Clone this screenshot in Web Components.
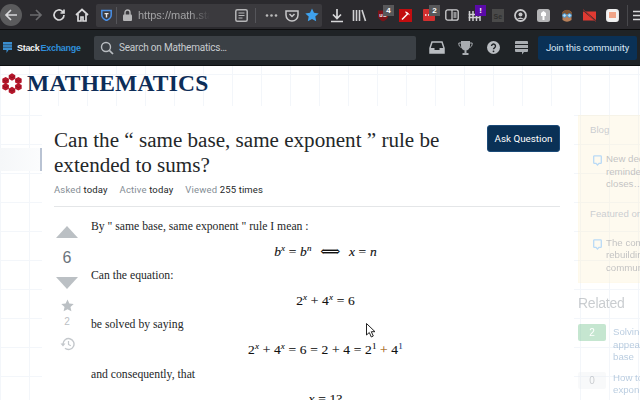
<!DOCTYPE html>
<html><head><meta charset="utf-8"><title>Mathematics</title>
<style>
html,body{margin:0;padding:0;width:640px;height:400px;overflow:hidden;background:#fff;font-family:"Liberation Sans",sans-serif}
</style></head><body>
<browser-toolbar></browser-toolbar>
<se-header></se-header>
<site-banner></site-banner>
<page-body></page-body>
<mouse-cursor></mouse-cursor>
<script>
function def(name,html){customElements.define(name,class extends HTMLElement{constructor(){super();this.attachShadow({mode:'open'}).innerHTML=html.replace(/\{(\w+)\}/g,(m,k)=>this.getAttribute(k)||'')}})}

def('tool-icon',`<style>
:host{display:flex;align-items:center;justify-content:center;width:23px;height:28px;position:relative;flex:none}
span{position:absolute;top:4px;left:12px;width:11px;height:11px;font:bold 8px/11px "Liberation Sans",sans-serif;color:#fff;text-align:center;background:var(--b,#58585a);display:var(--d,block)}
</style><slot></slot><span>{badge}</span>`);

def('browser-toolbar',`<style>
:host{display:flex;align-items:center;height:28px;padding-top:1px;background:#2b2a2e;border-bottom:1px solid #0c0c0d;overflow:hidden}
svg{display:block}
.s{fill:none;stroke:#d8d8da;stroke-width:1.7}
.back{width:22px;height:22px;border-radius:50%;background:#5b5b5d;display:flex;align-items:center;justify-content:center;flex:none}
.url{flex:none;width:226px;height:23px;margin-left:3px;background:#3b3a3e;border-radius:2px;display:flex;align-items:center;position:relative;box-sizing:border-box}
.url tool-icon{--d:none}
.txt{font:11px/23px "Liberation Sans",sans-serif;color:#a3a3a5;width:72px;overflow:hidden;white-space:nowrap;-webkit-mask:linear-gradient(90deg,#000 72%,transparent);mask:linear-gradient(90deg,#000 72%,transparent)}
.sep{width:1px;height:15px;background:#55555a;flex:none}
.none{--d:none}
</style>
<div class="back"><svg width="14" height="14" viewBox="0 0 14 14"><path class="s" d="M13 7H2M7 2 2 7l5 5"/></svg></div>
<tool-icon class="none" style="margin-left:2px"><svg width="14" height="14" viewBox="0 0 14 14"><path d="M1 7h11M7 2l5 5-5 5" fill="none" stroke="#6b6b6e" stroke-width="1.7"/></svg></tool-icon>
<tool-icon class="none"><svg width="14" height="14" viewBox="0 0 14 14"><path class="s" d="M12 7a5 5 0 1 1-1.6-3.7L12 5M12 1.500V5H8.500"/></svg></tool-icon>
<tool-icon class="none"><svg width="14" height="14" viewBox="0 0 14 14"><path class="s" d="M1 7 7 1.500 13 7M3 6v7h3V9h2v4h3V6"/></svg></tool-icon>
<div class="url">
 <tool-icon style="width:20px"><svg width="11" height="12" viewBox="0 0 11 12"><path d="M.8 1.500h9.400V6c0 3-2.500 4.500-4.700 5.500C3.300 10.500.8 9 .8 6z" fill="none" stroke="#4a90e6" stroke-width="1.500"/><path d="M3.500 4h4v1.200h-1.300V8.500H4.800V5.200H3.500z" fill="#e8e8ea"/></svg></tool-icon>
 <div class="sep" style="height:17px"></div>
 <tool-icon style="width:21px"><svg width="11" height="12" viewBox="0 0 11 12"><path d="M3 6V3.500a2.500 2.500 0 0 1 5 0V6" fill="none" stroke="#b5b5b7" stroke-width="1.400"/><rect x="1" y="5.500" width="9" height="6.500" rx="1" fill="#b5b5b7"/></svg></tool-icon>
 <div class="txt">https://math.stackexchange.com</div>
 <div style="flex:1"></div>
 <tool-icon style="width:23px"><svg width="13" height="13" viewBox="0 0 13 13"><rect x=".8" y=".8" width="11.400" height="11.400" rx="1.500" fill="none" stroke="#b5b5b7" stroke-width="1.500"/><path d="M3.500 4h6M3.500 6.500h6M3.500 9h4" stroke="#b5b5b7"/></svg></tool-icon>
 <div class="sep" style="margin:0 4px 0 2px"></div>
 <tool-icon style="width:22px"><svg width="13" height="3" viewBox="0 0 13 3"><circle cx="2" cy="1.500" r="1.300" fill="#bbb"/><circle cx="6.500" cy="1.500" r="1.300" fill="#bbb"/><circle cx="11" cy="1.500" r="1.300" fill="#bbb"/></svg></tool-icon>
 <tool-icon style="width:19px"><svg width="14" height="13" viewBox="0 0 14 13"><path d="M1 2h12v4a6 6 0 0 1-12 0z" fill="none" stroke="#c8c8ca" stroke-width="1.500"/><path d="M4.500 5 7 7.500 9.500 5" fill="none" stroke="#c8c8ca" stroke-width="1.500"/></svg></tool-icon>
 <tool-icon style="width:21px"><svg width="14" height="14" viewBox="0 0 14 14"><path d="M7 .5l2 4.300 4.700.6-3.400 3.200.9 4.700L7 11l-4.200 2.300.9-4.700L.3 5.400 5 4.800z" fill="#3fa2ee"/></svg></tool-icon>
</div>
<div style="width:3px;flex:none"></div>
<tool-icon class="none"><svg width="14" height="15" viewBox="0 0 14 15"><path d="M7 1v9M3 6.500 7 10.500l4-4M1 13.500h12" fill="none" stroke="#d8d8da" stroke-width="1.700"/></svg></tool-icon>
<tool-icon class="none"><svg width="15" height="13" viewBox="0 0 15 13"><path d="M1.500 1v11M4.500 1v11M7.500 1v11M10 1l3.500 11" fill="none" stroke="#d0d0d2" stroke-width="1.600"/></svg></tool-icon>
<tool-icon badge="4"><svg width="12" height="13" viewBox="0 0 12 13"><path d="M1 1.500h10V7c0 3-3 4.500-5 5.500C4 11.500 1 10 1 7z" fill="#7d1318"/><text x="2.300" y="8" font-family="Liberation Sans" font-size="5.500" font-weight="bold" fill="#eee">uO</text></svg></tool-icon>
<tool-icon class="none"><svg width="13" height="13" viewBox="0 0 13 13"><rect width="13" height="13" fill="#c20d0f"/><path d="M3 10.500 9 4.500" stroke="#fff" stroke-width="1.500"/><path d="M6 2.500q3 0 5 4-2-2-4-2z" fill="#fff"/></svg></tool-icon>
<tool-icon badge="2"><svg width="12" height="12" viewBox="0 0 12 12"><rect width="12" height="12" rx="1" fill="#d32f2f"/><path d="M2 6h1.500M5 6h1.500M8 6h1.500" stroke="#fff" stroke-width="1.500"/></svg></tool-icon>
<tool-icon class="none"><svg width="14" height="12" viewBox="0 0 14 12"><rect x=".8" y=".8" width="12.400" height="10.400" rx="2" fill="none" stroke="#d0d0d2" stroke-width="1.300"/><path d="M7 1v10" stroke="#d0d0d2" stroke-width="1.200"/><rect x="8.500" y="3" width="3" height="6" fill="#8f8f92"/></svg></tool-icon>
<tool-icon badge="!" style="--b:#5a0aa8"><svg width="13" height="13" viewBox="0 0 13 13"><path d="M1.500 2v10M5 2v10M8.500 2v10M12 2v10M.5 5.500h12M.5 8.500h12" fill="none" stroke="#d0d0d2" stroke-width="1.500"/></svg></tool-icon>
<tool-icon class="none"><svg width="12" height="13" viewBox="0 0 12 13"><rect width="12" height="13" fill="#4a4a4a"/><text x="1.500" y="10" font-family="Liberation Sans" font-size="7" font-weight="bold" fill="#2f2f2f">Se</text></svg></tool-icon>
<tool-icon class="none"><svg width="13" height="13" viewBox="0 0 13 13"><circle cx="6.500" cy="6.500" r="5.500" fill="none" stroke="#c8c8ca" stroke-width="1.800"/><circle cx="6.500" cy="5.500" r="2" fill="#c8c8ca"/><path d="M3 10q3.500-3 7 0z" fill="#c8c8ca"/></svg></tool-icon>
<tool-icon class="none"><svg width="13" height="13" viewBox="0 0 13 13"><rect width="13" height="13" rx="2.500" fill="#b4b4b6"/><path d="M4 4l2.500-2L9 4v3H7.500v4h-2V7H4z" fill="#fff"/></svg></tool-icon>
<tool-icon class="none"><svg width="14" height="15" viewBox="0 0 14 15"><path d="M2.500 4q4.500-4 9 0v8q-4.500 3.500-9 0z" fill="#b8805a"/><path d="M2 5Q7-1.500 12 5l-.5 1h-9z" fill="#7d5230"/><circle cx="4.500" cy="7.500" r="1.800" fill="#bfe0f2" stroke="#3c9ae0"/><circle cx="9.500" cy="7.500" r="1.800" fill="#bfe0f2" stroke="#3c9ae0"/></svg></tool-icon>
<tool-icon class="none"><svg width="15" height="13" viewBox="0 0 15 13"><rect x="1" y="2.500" width="13" height="9" fill="#e03a32"/><path d="M1 1l13 11" stroke="#2b2a2e" stroke-width="1.300"/><path d="M1 .5 14 12.500" stroke="#e03a32" stroke-width=".6"/></svg></tool-icon>
<tool-icon class="none"><svg width="13" height="13" viewBox="0 0 13 13"><rect x=".8" y=".8" width="11.400" height="11.400" rx="2.500" fill="#f4f4f4" stroke="#eee" stroke-width="1.500"/><rect x="3" y="3" width="7" height="6" fill="#f0a488"/></svg></tool-icon>
<div class="sep" style="height:21px;margin-left:3px;background:#48484c"></div>
<tool-icon class="none" style="width:16px;margin-left:3px"><svg width="13" height="11" viewBox="0 0 13 11"><path d="M0 1.500h13M0 5.500h13M0 9.500h13" stroke="#d8d8da" stroke-width="1.600"/></svg></tool-icon>
`);

def('se-header',`<style>
:host{display:flex;align-items:center;height:36px;background:#1f2326;box-sizing:border-box;border-bottom:1px solid #0d0f10;padding:0 3px;overflow:hidden}
.logo{width:91px;flex:none;display:flex;align-items:center;font:bold 9px "Liberation Sans",sans-serif;letter-spacing:-.3px;color:#f2f2f2}
.logo b{color:#2f8fdb;margin-left:1px}
.logo svg{margin-right:5px}
.search{width:322px;height:24px;background:#3b4045;border-radius:2px;display:flex;align-items:center;padding-left:6px;box-sizing:border-box;font:10px "Roboto","Liberation Sans",sans-serif;color:#c8ccd0;flex:none;letter-spacing:-.2px;white-space:nowrap}
.search svg{margin-right:5px}
.ic{display:flex;width:28px;justify-content:center;flex:none}
.join{flex:none;width:99px;height:24px;background:#0a3156;color:#d6e6f5;font:9.500px/24px "Roboto","Liberation Sans",sans-serif;letter-spacing:-.15px;text-align:center;border-radius:2px;margin-left:3px;white-space:nowrap}
</style>
<div class="logo"><svg width="9" height="12" viewBox="0 0 9 12"><path d="M0 0h9v8H5.500L3.500 11V8H0z" fill="#3a8ed0"/><path d="M0 2.700h9M0 5.300h9" stroke="#1f2326" stroke-width=".5"/></svg>Stack<b>Exchange</b></div>
<div class="search"><svg width="14" height="14" viewBox="0 0 14 14"><circle cx="6" cy="6" r="4.500" fill="none" stroke="#b9bdc1" stroke-width="1.400"/><path d="M9.300 9.300 13 13" stroke="#b9bdc1" stroke-width="1.700"/></svg>Search on Mathematics…</div>
<div style="width:7px;flex:none"></div>
<div class="ic"><svg width="16" height="13" viewBox="0 0 16 13"><path d="M3 1h10l2 6v5H1V7z" fill="none" stroke="#b9bdc1" stroke-width="1.500"/><path d="M1 7h4.500v2h5V7H15v5H1z" fill="#b9bdc1"/></svg></div>
<div class="ic"><svg width="15" height="14" viewBox="0 0 15 14"><path d="M3 0h9v5a4.500 4.500 0 0 1-9 0zM6.500 9h2v3h2v2h-6v-2h2z" fill="#a9adb1"/><path d="M3 2H.8c0 3 1 4 2.700 4.500M12 2h2.200c0 3-1 4-2.700 4.500" fill="none" stroke="#a9adb1"/></svg></div>
<div class="ic"><svg width="13" height="13" viewBox="0 0 13 13"><circle cx="6.500" cy="6.500" r="6.500" fill="#b9bdc1"/><path d="M4.500 5a2 2 0 1 1 3 1.800c-.7.400-1 .8-1 1.500" fill="none" stroke="#1f2326" stroke-width="1.400"/><circle cx="6.500" cy="10.300" r=".9" fill="#1f2326"/></svg></div>
<div class="ic"><svg width="13" height="14" viewBox="0 0 13 14"><path d="M1 0h11a1 1 0 0 1 1 1v2H0V1a1 1 0 0 1 1-1zM0 4h13v3H0zM0 8h13v2a1 1 0 0 1-1 1H9l-2 2.500V11H1a1 1 0 0 1-1-1z" fill="#a9adb1"/></svg></div>
<div class="join">Join this community</div>
`);

def('site-banner',`<style>
:host{display:flex;align-items:center;height:35px;padding-left:2px;box-sizing:border-box;background-color:#fff;background-image:linear-gradient(#f3f6fa 1px,transparent 1px),linear-gradient(90deg,#f3f6fa 1px,transparent 1px);background-size:29px 29px;background-position:0 8px}
h1{margin:0 0 0 5px;font:bold 23.500px/1 "Liberation Serif",serif;color:#0d2d58;letter-spacing:.2px}
</style>
<svg width="20" height="21" viewBox="0 0 20 21"><g fill="#b5162a"><path d="M10 .3l3.300 1.900v3.600L10 7.700 6.700 5.800V2.200z"/><path d="M16.400 3.900l3.300 1.900v3.600l-3.300 1.900-3.300-1.900V5.800z"/><path d="M16.400 10.200l3.300 1.900v3.600l-3.300 1.900-3.300-1.900v-3.600z"/><path d="M10 13.800l3.300 1.900v3.600L10 21.200l-3.300-1.900v-3.600z"/><path d="M3.600 10.200l3.300 1.900v3.600l-3.300 1.900-3.300-1.900v-3.600z"/><path d="M3.600 3.900l3.300 1.900v3.600l-3.300 1.900-3.300-1.900V5.800z"/></g><path d="M1 6.800 3.600 8.300 6.200 6.800M7.400 3.200 10 4.700l2.600-1.500M13.800 6.800l2.600 1.500L19 6.800M13.800 13.100l2.600 1.500 2.600-1.500M7.400 16.700l2.600 1.500 2.600-1.500M1 13.100l2.600 1.500 2.600-1.500" fill="none" stroke="#7e0d1c" stroke-width=".7"/></svg>
<h1>MATHEMATICS</h1>
`);

def('vote-cell',`<style>
:host{display:flex;flex-direction:column;align-items:center;width:26px;flex:none;color:#6a737c}
.up,.dn{width:0;height:0;border-left:11.500px solid transparent;border-right:11.500px solid transparent}
.up{border-bottom:12px solid #bbc0c4;margin-top:2px}
.dn{border-top:12px solid #bbc0c4;margin-top:9px}
.n{font:16px/20px "Liberation Sans",sans-serif;margin-top:10px}
.f{font:10px/12px "Liberation Sans",sans-serif;color:#bbc0c4;margin-top:4px}
svg{display:block}
</style>
<div class="up"></div><div class="n">6</div><div class="dn"></div>
<svg style="margin-top:10px" width="13" height="13" viewBox="0 0 14 14"><path d="M7 .5l2 4.400 4.700.5-3.500 3.200 1 4.700L7 11l-4.200 2.300 1-4.700L.3 5.400 5 4.900z" fill="#bbc0c4"/></svg>
<div class="f">2</div>
<svg style="margin-top:9px" width="15" height="14" viewBox="0 0 15 14"><path d="M3 7a5.500 5.500 0 1 1 2 4.300" fill="none" stroke="#c4c8cc" stroke-width="1.400"/><path d="M.5 6.500h5L3 9.500z" fill="#c4c8cc"/><path d="M8.500 4v3.500l2.300 1.300" fill="none" stroke="#c4c8cc" stroke-width="1.200"/></svg>
`);

def('question-post',`<style>
:host{display:flex;flex-direction:column;flex:1;min-width:0;padding-top:22px}
.head{display:flex;justify-content:space-between;align-items:flex-start}
h2{margin:0;font:400 21.100px/25px "Liberation Serif",serif;color:#242729;width:410px}
.ask{flex:none;width:73px;height:27px;background:#0a3156;border:1px solid #1b4a78;box-sizing:border-box;border-radius:3px;color:#fff;font:9.800px/25px "Roboto","Liberation Sans",sans-serif;text-align:center;margin-top:-3px;white-space:nowrap}
.meta{font:9.500px/14px "Roboto","Liberation Sans",sans-serif;color:#242729;display:flex;gap:12px;margin-top:5px;padding-bottom:9px;border-bottom:1px solid #e4e6e8;letter-spacing:.15px}
.meta i{font-style:normal;color:#848d95}
.row{display:flex;gap:11px}
.text{flex:1;min-width:0;font:11.700px/24.600px "Liberation Serif",serif;color:#242729;padding-top:8px}
.eq{text-align:center;font:13.500px/24.600px "Liberation Serif","DejaVu Serif",serif;color:#111;height:24.600px;-webkit-text-stroke:.12px #111;white-space:nowrap;letter-spacing:.15px}
.eq sup{font-size:9px;line-height:0;vertical-align:5px}
.o{color:#a0620a;-webkit-text-stroke-color:#a0620a}.u{color:#1a3c78;-webkit-text-stroke-color:#1a3c78}
.eq .w{margin:0 5px;font-size:14px}
.p{height:24.600px}
</style>
<div class="head"><h2>Can the “ same base, same exponent ” rule be extended to sums?</h2><div class="ask">Ask Question</div></div>
<div class="meta"><span><i>Asked</i> today</span><span><i>Active</i> today</span><span><i>Viewed</i> 255 times</span></div>
<div class="row"><vote-cell style="padding-top:17px"></vote-cell>
<div class="text">
<div class="p">By " same base, same exponent " rule I mean :</div>
<div class="eq"><i>b<sup>x</sup></i> = <i>b<sup>n</sup></i> <span class="w">&#x27FA;</span> <i>x</i> = <i>n</i></div>
<div class="p">Can the equation:</div>
<div class="eq">2<sup><i>x</i></sup> + 4<sup><i>x</i></sup> = 6</div>
<div class="p">be solved by saying</div>
<div class="eq">2<sup><i>x</i></sup> + 4<sup><i>x</i></sup> = 6 = 2 + 4 = 2<sup>1</sup> <span class="o">+</span> 4<sup class="u">1</sup></div>
<div class="p">and consequently, that</div>
<div class="eq"><i>x</i> = 1?</div>
</div></div>
`);

def('side-bar',`<style>
:host{display:block;flex:none;width:70px;margin-top:14px;opacity:.36;white-space:nowrap;overflow:hidden;font:9.700px/12.500px "Liberation Sans",sans-serif;color:#3b4045}
.box{background:#fcf0d2;padding:8px 0 0 11px;border:1px solid #fbeec8;border-right:0;width:100px;box-sizing:border-box;height:168px}
.t{font-weight:400;color:#6a737c;line-height:12px;font-size:9.700px}
.it{display:flex;gap:4px;margin:17px 0 0 3px;color:#555}
.it svg{flex:none;margin-top:2px}
h3{font:400 14px/20px "Liberation Sans",sans-serif;color:#6a737c;margin:10px 0 11px 0;letter-spacing:-.25px}
.r{display:flex;gap:7px;margin-bottom:8px;color:#3d72a8}
.b{flex:none;width:28px;height:17px;text-align:center;font-size:10px;line-height:17px;background:#5eba7d;color:#fff;border-radius:2px}
.b.z{background:#eceef0;color:#6a737c}
.m{padding-top:2px}
</style>
<div class="box"><div class="t">Blog</div>
<div class="it"><svg width="9" height="11" viewBox="0 0 9 11"><path d="M1.500.8h6a.8.8 0 0 1 .8.8v6a.8.8 0 0 1-.8.8H6L4.500 10 3 8.400H1.500a.8.8 0 0 1-.8-.8v-6a.8.8 0 0 1 .8-.8z" fill="none" stroke="#3b97e6" stroke-width="1.300"/></svg><div>New decision<br>reminder to vote<br>closes…</div></div>
<div class="t" style="margin-top:17px">Featured on Meta</div>
<div class="it"><svg width="9" height="11" viewBox="0 0 9 11"><path d="M1.500.8h6a.8.8 0 0 1 .8.8v6a.8.8 0 0 1-.8.8H6L4.500 10 3 8.400H1.500a.8.8 0 0 1-.8-.8v-6a.8.8 0 0 1 .8-.8z" fill="none" stroke="#3b97e6" stroke-width="1.300"/></svg><div>The company<br>rebuilding trust<br>community…</div></div>
</div>
<h3>Related</h3>
<div class="r"><div class="b">2</div><div class="m">Solving<br>appearing<br>base</div></div>
<div class="r"><div class="b z">0</div><div>How to<br>exponents</div></div>
`);

def('page-body',`<style>
:host{display:flex;height:300px;overflow:hidden;background-color:#fff;background-image:linear-gradient(#f3f6fa 1px,transparent 1px),linear-gradient(90deg,#f3f6fa 1px,transparent 1px);background-size:29px 29px;background-position:0 14px}
.gut{flex:none;width:40px;box-sizing:border-box;padding-top:47px}
.gut div{height:23px;background:linear-gradient(90deg,#f5f7f9,#fbfcfd)}
.mark{flex:none;width:2px;height:23px;background:#b9c3d3;margin-top:47px}
.main{flex:none;width:532px;background:#fff;box-sizing:border-box;padding-left:12px;padding-right:14px;display:flex;margin-top:5px}
</style>
<div class="gut"><div></div></div><div class="mark"></div>
<div class="main"><question-post></question-post></div>
<side-bar style="margin-left:4px"></side-bar>
`);

def('mouse-cursor',`<style>
:host{position:fixed;left:366px;top:323px;display:block;width:11px;height:15px}
</style><svg width="11" height="15" viewBox="0 0 11 15"><path d="M.5.5v11.500l2.800-2.500 2 4.500 2-1-2-4.300h3.700z" fill="#fff" stroke="#222" stroke-width="1"/></svg>`);
</script>
</body></html>
